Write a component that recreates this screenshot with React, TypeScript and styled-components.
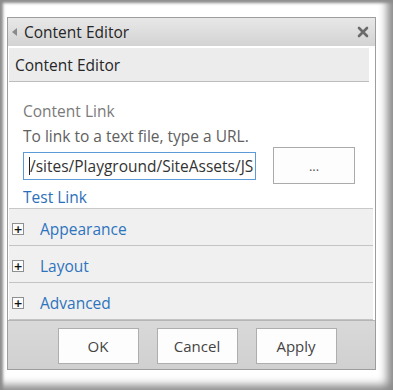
import styled, { createGlobalStyle } from 'styled-components';

const GlobalStyle = createGlobalStyle`
  html, body {
    margin: 0;
    padding: 0;
    background: #ffffff;
  }
  body {
    font-family: 'Open Sans', 'Noto Sans', sans-serif;
  }
`;

const sections = ['Appearance', 'Layout', 'Advanced'];

const App = () => {
  return (
    <>
      <GlobalStyle />
      <Frame>
        <Panel>
          <TitleBar>
            <Arrow />
            <TitleText>Content Editor</TitleText>
            <CloseIcon viewBox="0 0 12 12">
              <path d="M2 2 L10 10 M10 2 L2 10" stroke="#6b6b6b" strokeWidth="2.6" strokeLinecap="round" />
            </CloseIcon>
          </TitleBar>
          <Body>
            <SectionHeader>Content Editor</SectionHeader>
            <Content>
              <FieldLabel>Content Link</FieldLabel>
              <FieldHint>To link to a text file, type a URL.</FieldHint>
              <InputRow>
                <InputBox>
                  <Caret />
                  <InputText>/sites/Playground/SiteAssets/JS</InputText>
                </InputBox>
                <BrowseButton>...</BrowseButton>
              </InputRow>
              <TestLink>Test Link</TestLink>
            </Content>
            {sections.map((section) => (
              <AccordionRow key={section}>
                <PlusBox>+</PlusBox>
                <AccordionTitle>{section}</AccordionTitle>
              </AccordionRow>
            ))}
          </Body>
          <Footer>
            <FooterButton>OK</FooterButton>
            <FooterButton>Cancel</FooterButton>
            <FooterButton>Apply</FooterButton>
          </Footer>
        </Panel>
      </Frame>
    </>
  );
};

export default App;

const Frame = styled.div`
  width: 393px;
  height: 390px;
  box-sizing: border-box;
  padding: 17px 17px 20px 7px;
  background: #ffffff;
  box-shadow: inset 3px 3px 3px #8c8c8c, inset -9px -8px 8px -3px #8a8a8a;
`;

const Panel = styled.div`
  height: 353px;
  box-sizing: border-box;
  border: 1px solid #9d9d9d;
  background: #ffffff;
  display: flex;
  flex-direction: column;
`;

const TitleBar = styled.div`
  height: 28px;
  flex: none;
  display: flex;
  align-items: center;
  padding: 0 6px 0 4px;
  background: linear-gradient(#e8e8e8, #d3d3d3);
`;

const Arrow = styled.span`
  width: 0;
  height: 0;
  border-top: 4px solid transparent;
  border-bottom: 4px solid transparent;
  border-right: 5px solid #8a8a8a;
  margin-right: 7px;
`;

const TitleText = styled.span`
  flex: 1;
  font-size: 15.5px;
  color: #262626;
`;

const CloseIcon = styled.svg`
  width: 12px;
  height: 12px;
`;

const Body = styled.div`
  flex: 1;
  display: flex;
  flex-direction: column;
  padding: 2px 2px 0 1px;
`;

const SectionHeader = styled.div`
  height: 33px;
  flex: none;
  display: flex;
  align-items: center;
  padding-left: 6px;
  margin-right: 4px;
  background: #ececec;
  border-bottom: 1px solid #bdbdbd;
  font-size: 15.5px;
  color: #262626;
`;

const Content = styled.div`
  display: flex;
  flex: none;
  flex-direction: column;
  padding: 19px 0 0 14px;
  height: 127px;
  box-sizing: border-box;
  border-bottom: 1px solid #c8c8c8;
`;

const FieldLabel = styled.div`
  font-size: 15.5px;
  line-height: 20px;
  color: #7a7a7a;
`;

const FieldHint = styled.div`
  font-size: 15.5px;
  line-height: 20px;
  margin-top: 5px;
  color: #606060;
`;

const InputRow = styled.div`
  display: flex;
  align-items: center;
  gap: 17px;
  margin-top: 1px;
`;

const InputBox = styled.div`
  width: 233px;
  height: 28px;
  box-sizing: border-box;
  border: 1px solid #5d9bd8;
  display: flex;
  align-items: center;
  padding-left: 5px;
  overflow: hidden;
`;

const InputText = styled.span`
  flex: 1;
  min-width: 0;
  overflow: hidden;
  white-space: nowrap;
  font-size: 15.5px;
  color: #333333;
`;

const Caret = styled.span`
  flex: none;
  width: 1px;
  height: 18px;
  background: #222222;
`;

const BrowseButton = styled.div`
  width: 82px;
  height: 37px;
  box-sizing: border-box;
  border: 1px solid #ababab;
  background: #fdfdfd;
  display: flex;
  align-items: center;
  justify-content: center;
  font-size: 13px;
  color: #555555;
`;

const TestLink = styled.div`
  font-size: 15.5px;
  line-height: 20px;
  margin-top: 3px;
  color: #2b6fba;
`;

const AccordionRow = styled.div`
  height: 37px;
  flex: none;
  box-sizing: border-box;
  display: flex;
  align-items: center;
  padding: 4px 0 0 3px;
  background: #f0f0f0;
  border-bottom: 1px solid #c4c4c4;
`;

const PlusBox = styled.span`
  width: 12px;
  height: 12px;
  box-sizing: border-box;
  border: 1px solid #8f8f8f;
  background: #fbfbfb;
  display: flex;
  align-items: center;
  justify-content: center;
  font-family: 'DejaVu Sans', sans-serif;
  font-size: 11px;
  font-weight: bold;
  line-height: 1;
  color: #111111;
`;

const AccordionTitle = styled.span`
  margin-left: 16px;
  font-size: 15.5px;
  color: #2e74bd;
`;

const Footer = styled.div`
  height: 49px;
  flex: none;
  box-sizing: border-box;
  border-top: 1px solid #b5b5b5;
  background: linear-gradient(#d9d9d9, #d0d0d0);
  display: flex;
  align-items: flex-start;
  justify-content: center;
  gap: 18px;
  padding-top: 7px;
  padding-left: 11px;
`;

const FooterButton = styled.button`
  width: 81px;
  height: 36px;
  box-sizing: border-box;
  border: 1px solid #aeaeae;
  background: #fdfdfd;
  font-family: 'Open Sans', 'Noto Sans', sans-serif;
  font-size: 15px;
  color: #444444;
  padding: 0;
`;
